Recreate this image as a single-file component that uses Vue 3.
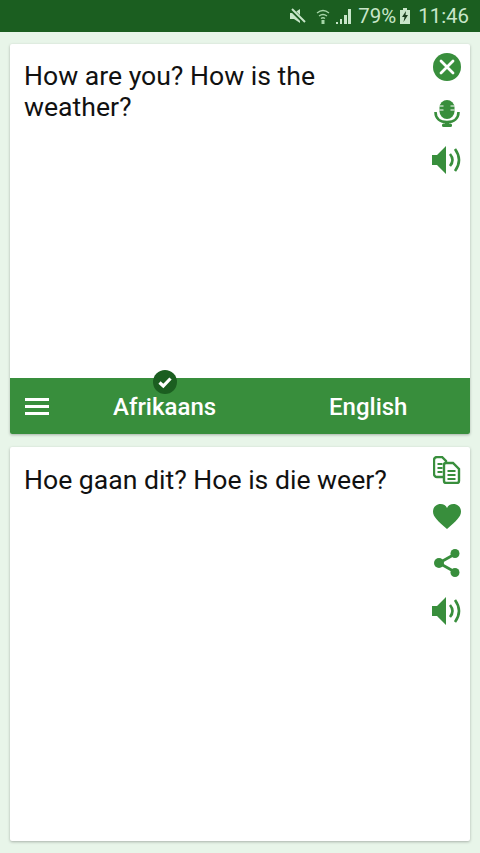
<template>
  <div class="screen">
    <div class="status">
      <svg class="st-mute" viewBox="0 0 18 18" width="18" height="18"><path d="M1 6h4l6-4v14l-6-4H1z" fill="#c8e6c9"/><path d="M2 2l14 14" stroke="#1b5e20" stroke-width="4"/><path d="M3 2l13 13" stroke="#c8e6c9" stroke-width="2"/></svg>
      <svg class="st-wifi" viewBox="0 0 14 18" width="14" height="18"><path d="M1 6q6-5 12 0M3 9q4-3 8 0M5 11.500q2-1.500 4 0" fill="none" stroke="#a5d6a7" stroke-width="1.300"/><path d="M5.500 13h3v4h-3z" fill="#a5d6a7"/></svg>
      <svg class="st-signal" viewBox="0 0 16 16" width="16" height="16"><path d="M0 14h2v2H0zM4 11h2v5H4zM8 7h3v9H8zM12 1h3v15h-3z" fill="#c8e6c9"/></svg>
      <span class="st-pct">79%</span>
      <svg class="st-batt" viewBox="0 0 10 16" width="10" height="16"><path d="M3 0h4v2h3v14H0V2h3z" fill="#c8e6c9"/><path d="M6 3L2 9h2.500L3.500 14 8 7H5.500z" fill="#1b3d1e"/></svg>
      <span class="st-time">11:46</span>
    </div>

    <div class="main">
      <div class="card card-input">
        <div class="body body-input">
          <div class="text">How are you? How is the weather?</div>
          <div class="icons icons-input">
            <svg viewBox="0 0 28 28" width="28" height="28"><circle cx="14" cy="14" r="14" fill="#388e3c"/><path d="M8 8l12 12M20 8L8 20" stroke="#fff" stroke-width="2.800" stroke-linecap="round"/></svg>
            <svg viewBox="0 0 28 27" width="28" height="27"><rect x="6.500" y="0" width="15" height="19" rx="7.500" fill="#388e3c"/><path d="M6.500 6h4M17.500 6h4M6.500 10h4M17.500 10h4" stroke="#fff" stroke-width="1.200"/><path d="M2.500 12c0 6.500 4.500 10 11.500 10s11.500-3.500 11.500-10" fill="none" stroke="#388e3c" stroke-width="2.600"/><path d="M14 21v3" stroke="#388e3c" stroke-width="4"/><rect x="9" y="23.500" width="10" height="3.500" rx="1.500" fill="#388e3c"/></svg>
            <svg viewBox="0 0 30 28" width="30" height="28"><path d="M0 9h5l9-9v28l-9-9H0z" fill="#388e3c"/><path d="M18 8q5 6 0 12" fill="none" stroke="#388e3c" stroke-width="2.600"/><path d="M23 3q8 11 0 22" fill="none" stroke="#388e3c" stroke-width="2.600"/></svg>
          </div>
        </div>
        <div class="bar">
          <span class="burger"><i></i><i></i><i></i></span>
          <span class="lang lang-from">Afrikaans</span>
          <span class="lang lang-to">English</span>
          <svg class="badge" viewBox="0 0 24 24" width="24" height="24"><circle cx="12" cy="12" r="12" fill="#1b5e20"/><path d="M6.500 12.500l3.800 3.500L17.500 8.500" fill="none" stroke="#fff" stroke-width="3.200"/></svg>
        </div>
      </div>

      <div class="card card-output">
        <div class="body">
          <div class="text text-out">Hoe gaan dit? Hoe is die weer?</div>
          <div class="icons icons-output">
            <svg viewBox="0 0 28 28" width="28" height="28"><path d="M11 21H4a3 3 0 0 1-3-3V4a3 3 0 0 1 3-3h5l4 4v2" fill="none" stroke="#388e3c" stroke-width="2.400"/><path d="M4.500 8h5M4.500 12h5M4.500 16h5" stroke="#388e3c" stroke-width="1.800"/><path d="M13 7h7l6 6v12a2 2 0 0 1-2 2H13a2 2 0 0 1-2-2V9a2 2 0 0 1 2-2z" fill="#fff" stroke="#388e3c" stroke-width="2.400"/><path d="M14.500 15h8M14.500 19h8M14.500 23h8" stroke="#388e3c" stroke-width="1.800"/></svg>
            <svg viewBox="0 0 28 25" width="28" height="25"><path d="M14 25C5 17 0 13 0 7.500 0 3 3.500 0 7.500 0 10.500 0 13 1.500 14 4c1-2.500 3.500-4 6.500-4C24.500 0 28 3 28 7.500 28 13 23 17 14 25z" fill="#388e3c"/></svg>
            <svg viewBox="0 0 26 28" width="26" height="28"><path d="M21 5L5 14l16 9" fill="none" stroke="#388e3c" stroke-width="2.800"/><circle cx="21" cy="4.500" r="4.500" fill="#388e3c"/><circle cx="5" cy="14" r="5" fill="#388e3c"/><circle cx="21" cy="23.500" r="4.500" fill="#388e3c"/></svg>
            <svg viewBox="0 0 30 28" width="30" height="28"><path d="M0 9h5l9-9v28l-9-9H0z" fill="#388e3c"/><path d="M18 8q5 6 0 12" fill="none" stroke="#388e3c" stroke-width="2.600"/><path d="M23 3q8 11 0 22" fill="none" stroke="#388e3c" stroke-width="2.600"/></svg>
          </div>
        </div>
      </div>
    </div>
  </div>
</template>

<script setup>
</script>

<style scoped>
.screen {
  width: 480px;
  height: 853px;
  display: flex;
  flex-direction: column;
  background: #e8f5e9;
  font-family: Roboto, "Liberation Sans", sans-serif;
  overflow: hidden;
}
.status {
  height: 32px;
  flex: none;
  background: #1b5e20;
  display: flex;
  align-items: center;
  justify-content: flex-end;
  padding-right: 11px;
  color: #c8e6c9;
  font-size: 20.4px;
}
.st-mute { margin-right: 9px; }
.st-wifi { margin-right: 6px; }
.st-signal { margin-right: 6px; }
.st-pct { margin-right: 4px; }
.st-batt { margin-right: 8px; }
.main {
  flex: 1;
  display: flex;
  flex-direction: column;
  gap: 13px;
  padding: 12px 10px;
  min-height: 0;
}
.card {
  background: #fff;
  border-radius: 2px;
  box-shadow: 0 1px 3px rgba(0, 0, 0, .28);
  display: flex;
  flex-direction: column;
}
.card-input { height: 390px; flex: none; }
.card-output { flex: 1; }
.body {
  flex: 1;
  display: flex;
  justify-content: space-between;
  padding: 17px 8px 0 14px;
}
.body-input { padding-top: 16px; }
.text {
  width: 310px;
  font-size: 26.6px;
  line-height: 31px;
  color: #111;
}
.text-out { width: 385px; }
.icons {
  display: flex;
  flex-direction: column;
  align-items: center;
  width: 30px;
}
.icons-input { gap: 19px; margin-top: -7px; }
.icons-output { gap: 20px; margin-top: -8px; }
.bar {
  position: relative;
  height: 56px;
  flex: none;
  background: #388e3c;
  border-radius: 0 0 2px 2px;
  display: flex;
  align-items: center;
  color: #fff;
  font-size: 24px;
  font-weight: 500;
}
.burger {
  margin-left: 15px;
  width: 24px;
  display: flex;
  flex-direction: column;
  gap: 4px;
}
.burger i {
  display: block;
  height: 3px;
  background: #fff;
}
.lang { position: absolute; top: 14px; line-height: 30px; }
.lang-from { left: 103px; }
.lang-to { left: 319px; }
.badge {
  position: absolute;
  left: 143px;
  top: -8px;
}
</style>
